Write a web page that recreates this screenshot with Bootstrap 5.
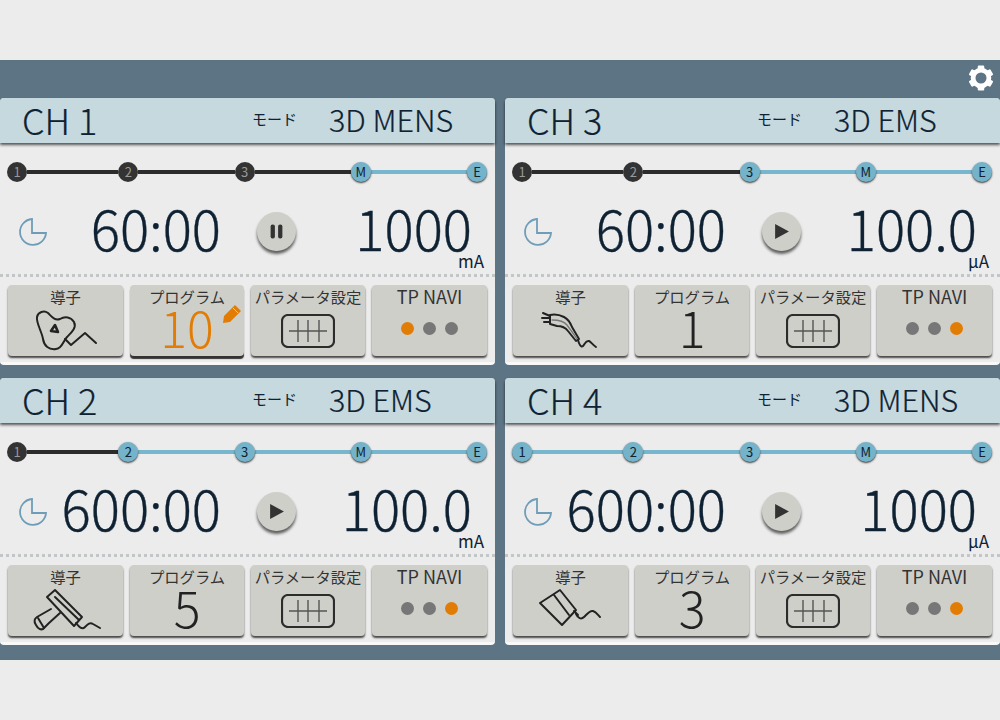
<!DOCTYPE html>
<html lang="ja">
<head>
  <meta charset="UTF-8" />
  <title>CH Panel</title>
  <link href="https://cdn.jsdelivr.net/npm/bootstrap@5.3.2/dist/css/bootstrap.min.css" rel="stylesheet">
  <script src="https://cdn.jsdelivr.net/npm/bootstrap@5.3.2/dist/js/bootstrap.bundle.min.js"></script>
  <style>
    body {
      background: #ececec;
      font-family: "Noto Sans CJK JP", "Noto Sans", sans-serif;
      color: #0f2233;
      overflow: hidden;
    }
    .stage { margin-top: 60px; height: 600px; background: #5d7485; }
    .topbar { height: 38px; padding: 0 6px 2px 0; }
    .ch-grid { display: grid; grid-template-columns: 495px 495px; grid-auto-rows: 267px; column-gap: 10px; row-gap: 13px; }
    .ch-panel { background: #ececec; border-radius: 4px; border-bottom: 3px solid #f8f8f8; }
    .ch-head { height: 45px; background: #c5d9df; border-radius: 4px 4px 0 0; box-shadow: 0 2px 3px rgba(0,0,0,.65); padding: 0 0 3px 22px; }
    .ch-name { width: 230px; font-size: 36px; font-weight: 300; line-height: 42px; -webkit-text-stroke: .2px #0f2233; }
    .ch-mode-label { width: 77px; font-size: 15px; line-height: 20px; }
    .ch-mode { font-size: 30.5px; font-weight: 300; line-height: 42px; -webkit-text-stroke: .2px #0f2233; }

    .stepper { height: 20px; margin: 19px 8px 0 7px; }
    .step { width: 20px; height: 20px; border-radius: 50%; flex: none; font-size: 13px; line-height: 20px; text-align: center; position: relative; z-index: 1; }
    .step-done { background: #333; color: #999; }
    .step-todo { background: #74b3ca; color: #10222e; box-shadow: 0 1px 2px rgba(0,0,0,.8); }
    .seg { height: 4px; flex: 1 1 96px; background: #77b6cd; }
    .seg-first { flex: 1 1 91px; }
    .seg-done { background: #2c2c2c; }

    .ch-main { height: 95px; border-bottom: 3px dotted #c2c6c7; }
    .clock-col { width: 50px; padding-left: 17px; margin-top: 7px; flex: none; }
    .clock-col svg { display: block; }
    .time-col { width: 171px; text-align: right; font-size: 54.5px; font-weight: 300; line-height: 1; white-space: nowrap; -webkit-text-stroke: .35px #0f2233; }
    .play-col { width: 110px; margin-top: 7px; }
    .play-btn { width: 39px; height: 39px; border: 0; padding: 0; border-radius: 50%; background: #cfcfca; box-shadow: 0 3px 3px rgba(0,0,0,.6); }
    .value-col { width: 141px; text-align: right; font-size: 54.5px; font-weight: 300; line-height: 1; position: relative; white-space: nowrap; -webkit-text-stroke: .35px #0f2233; }
    .unit { position: absolute; right: -12px; bottom: -14px; font-size: 17px; font-weight: 400; line-height: 1; -webkit-text-stroke: 0; }

    .btn-row { display: grid; grid-template-columns: 115px 114px 114px 115px; column-gap: 7px; padding: 8px 8px 0; }
    .tile { height: 71px; border: 0; padding: 0; background: #cfcfca; border-radius: 4px; box-shadow: 0 2px 2px rgba(0,0,0,.7); color: #333; display: flex; flex-direction: column; align-items: center; position: relative; }
    .tile-on { box-shadow: 0 3px 1px #333; }
    .tile-label { font-size: 15.3px; line-height: 22px; height: 23px; white-space: nowrap; }
    .tile-label-en { font-size: 18px; }
    .tile-num { font-size: 50px; font-weight: 300; line-height: 46px; margin-top: -5px; color: #222; }
    .tile-num-on { color: #e17c05; }
    .pencil { position: absolute; right: 3px; top: 20px; }
    .probe { stroke: #222; stroke-width: 2; fill: none; stroke-linecap: round; stroke-linejoin: round; overflow: visible; }
    .param-icon { margin-top: 6px; }
    .navi-row { gap: 9px; margin-top: 14px; }
    .navi-dot { width: 13px; height: 13px; border-radius: 50%; background: #777; }
    .navi-on { background: #e17c05; }
  </style>
</head>

<body>
  <div class="stage">
    <div class="topbar d-flex justify-content-end align-items-center">
      <svg width="26" height="26" viewBox="0 0 24 24">
        <circle cx="12" cy="12" r="7.3" fill="none" stroke="#fff" stroke-width="4.4"/>
        <g fill="#fff">
          <rect x="9" y="0.5" width="6" height="5" rx="1"/>
          <rect x="9" y="0.5" width="6" height="5" rx="1" transform="rotate(60 12 12)"/>
          <rect x="9" y="0.5" width="6" height="5" rx="1" transform="rotate(120 12 12)"/>
          <rect x="9" y="0.5" width="6" height="5" rx="1" transform="rotate(180 12 12)"/>
          <rect x="9" y="0.5" width="6" height="5" rx="1" transform="rotate(240 12 12)"/>
          <rect x="9" y="0.5" width="6" height="5" rx="1" transform="rotate(300 12 12)"/>
        </g>
      </svg>
    </div>
    <div class="ch-grid" id="panels"></div>
  </div>

  <script>
    const probes = {
      blob: `<path d="M2 9C3 4 9 2 13 5C17 9 20 13 25 11C30 8 36 9 39 14C42 20 36 25 32 29C28 33 27 41 21 41C14 42 9 38 8 31C7 24 1 15 2 9Z"/><path d="M16 23L20 17L23 24Z" stroke-width="2.6"/><path d="M30 31L36 37L50 25L61 35"/>`,
      tube: `<path d="M10 7C15 6 20 7 24 9C28 11 30 14 32 19L39 31L36 33L28 23C25 19 22 18 17 18L10 16Z"/><path d="M12 12C18 12 24 13 27 17C30 21 33 25 37 31" stroke="#777" stroke-width="1.3"/><path d="M3 5L10 8M2 10H10M4 14L10 14"/><path d="M38 32C39 36 41 40 43 38C45 36 46 32 49 33C51 34 53 37 56 39"/>`,
      gun: `<path d="M12 9L20 2L47 29L39 38Z"/><path d="M20 9L44 32"/><path d="M16 21L2 29C-1 31 -1 34 1 37C3 41 6 42 8 41L14 35L25 25"/><path d="M3 30L9 40"/><path d="M41 35C44 39 47 42 50 39C53 36 55 34 58 36L65 40"/>`,
      plate: `<path d="M0 15L20 2L36 22L22 37Z"/><path d="M14 7L29 27"/><path d="M34 23L38 27M36 26C38 30 41 32 44 29C47 26 50 22 53 23C56 24 58 27 60 29"/>`
    };

    const channels = [
      { name: "CH 1", mode: "3D MENS", done: 3, time: "60:00", paused: true, value: "1000", unit: "mA", probe: "blob", num: "10", on: true, navi: 0 },
      { name: "CH 3", mode: "3D EMS", done: 2, time: "60:00", paused: false, value: "100.0", unit: "µA", probe: "tube", num: "1", on: false, navi: 2 },
      { name: "CH 2", mode: "3D EMS", done: 1, time: "600:00", paused: false, value: "100.0", unit: "mA", probe: "gun", num: "5", on: false, navi: 2 },
      { name: "CH 4", mode: "3D MENS", done: 0, time: "600:00", paused: false, value: "1000", unit: "µA", probe: "plate", num: "3", on: false, navi: 2 }
    ];
    const stepNames = ["1", "2", "3", "M", "E"];

    function stepper(done) {
      let html = "";
      stepNames.forEach((s, i) => {
        html += `<div class="step ${i < done ? "step-done" : "step-todo"}">${s}</div>`;
        if (i < 4) html += `<div class="seg ${i === 0 ? "seg-first" : ""} ${i < done ? "seg-done" : ""}"></div>`;
      });
      return html;
    }

    function playIcon(paused) {
      if (paused) return `<svg width="15" height="15" viewBox="0 0 14 14" fill="#333"><rect x="1.5" y="0.5" width="4" height="13" rx="1.8"/><rect x="8.5" y="0.5" width="4" height="13" rx="1.8"/></svg>`;
      return `<svg width="17" height="17" viewBox="0 0 16 16" fill="#333"><path d="M2 1L15 8L2 15Z"/></svg>`;
    }

    let html = "";
    for (const c of channels) {
      const dots = [0, 1, 2].map(i => `<div class="navi-dot ${i === c.navi ? "navi-on" : ""}"></div>`).join("");
      html += `
      <div class="ch-panel">
        <div class="ch-head d-flex align-items-center">
          <div class="ch-name">${c.name}</div>
          <div class="ch-mode-label">モード</div>
          <div class="ch-mode">${c.mode}</div>
        </div>
        <div class="stepper d-flex align-items-center">${stepper(c.done)}</div>
        <div class="ch-main d-flex align-items-center">
          <div class="clock-col">
            <svg width="32" height="32" viewBox="-16 -16 32 32" fill="none" stroke="#6f9db8" stroke-width="1.8"><path d="M-1 -13A13 13 0 1 0 13 1H-1Z"/></svg>
          </div>
          <div class="time-col">${c.time}</div>
          <div class="play-col d-flex justify-content-center">
            <button class="play-btn d-flex align-items-center justify-content-center">${playIcon(c.paused)}</button>
          </div>
          <div class="value-col">${c.value}<span class="unit">${c.unit}</span></div>
        </div>
        <div class="btn-row">
          <button class="tile">
            <span class="tile-label">導子</span>
            <svg class="probe" width="62" height="44" viewBox="0 0 62 44">${probes[c.probe]}</svg>
          </button>
          <button class="tile ${c.on ? "tile-on" : ""}">
            <span class="tile-label">プログラム</span>
            <span class="tile-num ${c.on ? "tile-num-on" : ""}">${c.num}</span>
            ${c.on ? `<svg class="pencil" width="18" height="18" viewBox="0 0 18 18" fill="#e17c05"><path d="M12 0L18 6L7 17L0 18L1 11Z"/><path d="M10 3L15 8" stroke="#cfcfca" stroke-width="1"/></svg>` : ""}
          </button>
          <button class="tile">
            <span class="tile-label">パラメータ設定</span>
            <svg class="param-icon" width="54" height="34" viewBox="0 0 54 34" fill="none">
              <rect x="1" y="1" width="52" height="32" rx="6" stroke="#2c2c2c" stroke-width="2.2"/>
              <path d="M8 17H46M17 6V28M27 6V28M38 6V28" stroke="#555" stroke-width="1.4"/>
            </svg>
          </button>
          <button class="tile">
            <span class="tile-label tile-label-en">TP NAVI</span>
            <div class="d-flex navi-row">${dots}</div>
          </button>
        </div>
      </div>`;
    }
    document.getElementById("panels").innerHTML = html;
  </script>
</body>
</html>
